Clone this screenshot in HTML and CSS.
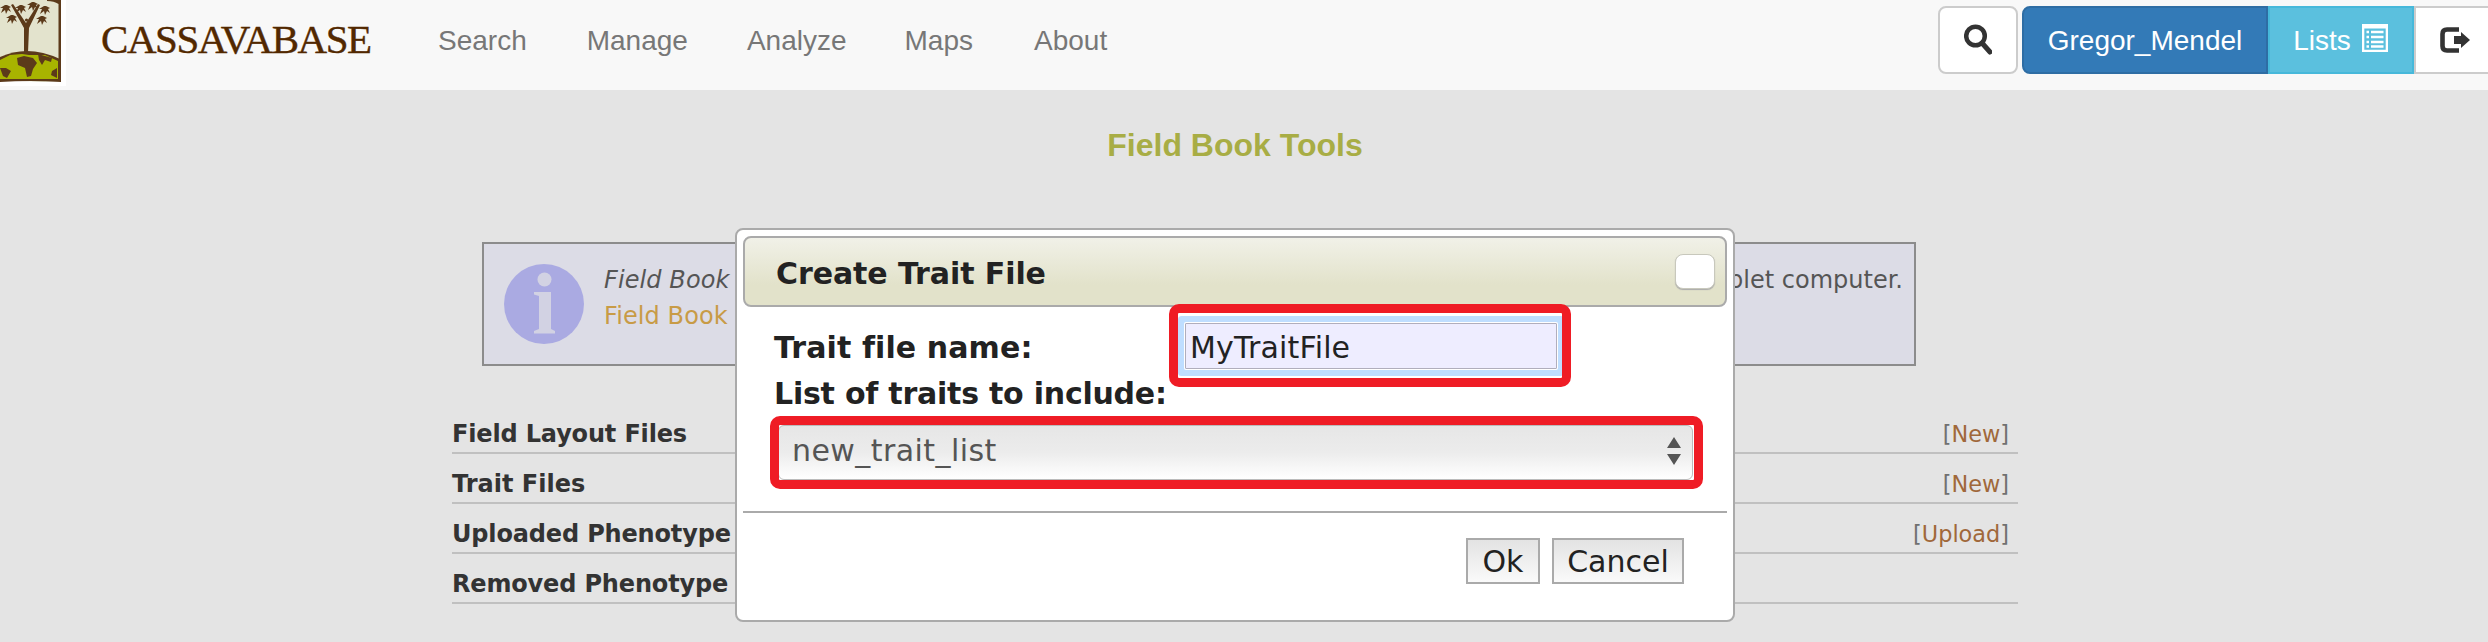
FILE: index.html
```html
<!DOCTYPE html>
<html lang="en">
<head>
<meta charset="utf-8">
<title>Field Book Tools</title>
<link rel="stylesheet" href="styles.css">
</head>
<body>
<header class="navbar">
  <svg class="logo" viewBox="0 0 66 86">
    <rect width="66" height="86" fill="#fff"/>
    <path d="M0 0H56L60 2V81L44 82L0 80Z" fill="#e3e3cd"/>
    <path d="M0 57Q28 44 60 59V81L0 80Z" fill="#5c3a1a"/>
    <path d="M0 60L10 55L22 54L29 55L45 55L58 61V79L40 80L0 79Z" fill="#a8b400"/>
    <path d="M17 58L24 56L33 58L37 63L33 69L31 76L27 77L25 68L18 65ZM38 54L52 58L51 62L45 60L42 65L39 60ZM0 68L6 68L11 71L7 78L3 76ZM57 68V78L51 75L52 71Z" fill="#5c3a1a"/>
    <path d="M47 0H61V82Q30 80 0 82V79H58.500V4Q54 1 47 1Z" fill="#5c3a1a"/>
    <path d="M24 53V28L11 5L13 4L26 23L38 4L40 5L29 28L28 53Z" fill="#5c3a1a"/>
    <g fill="#5c3a1a">
      <path id="leaf" d="M5 5L0 8L3 8L1 13L5 10L6 14L8 10L11 12L9 8L11 7L7 5Z"/>
      <use href="#leaf" x="15" y="0"/><use href="#leaf" x="27" y="-3"/><use href="#leaf" x="39" y="1"/>
      <use href="#leaf" x="6" y="10"/><use href="#leaf" x="36" y="11"/>
      <circle cx="26.500" cy="20" r="1.600"/>
    </g>
  </svg>
  <span class="brand">CASSAVABASE</span>
  <nav class="menu"><a>Search</a><a>Manage</a><a class="analyze">Analyze</a><a class="maps">Maps</a><a class="about">About</a></nav>
  <div class="tools">
    <button class="btn btn-search"><svg class="glyph" viewBox="0 0 28 32"><circle cx="11.500" cy="12" r="9.300" fill="none" stroke="#333" stroke-width="4.500"/><path d="M18 19L26 28" stroke="#333" stroke-width="5" stroke-linecap="round"/></svg></button>
    <div class="group">
      <button class="btn btn-user">Gregor_Mendel</button>
      <button class="btn btn-lists"><span>Lists</span><svg class="list-icon" viewBox="0 0 26 28"><path fill="#fff" fill-rule="evenodd" d="M0 0H26V28H0ZM2.300 4.500V25.700H23.700V4.500Z"/><path stroke="#fff" stroke-width="2.400" d="M4.500 8H7M9 8H21.500M4.500 13H7M9 13H21.500M4.500 18H7M9 18H21.500M4.500 22.500H7M9 22.500H21.500"/></svg></button>
      <button class="btn btn-out"><svg class="out-icon" viewBox="0 0 30 26"><path d="M19 2.500H7Q2.500 2.500 2.500 7V19Q2.500 23.500 7 23.500H19" fill="none" stroke="#333" stroke-width="4.600"/><path d="M14 9H21V5L30 13L21 21V17H14Z" fill="#333"/></svg></button>
    </div>
  </div>
</header>
<main class="page">
  <h1 class="page-title">Field Book Tools</h1>
  <section class="info">
    <svg class="info-icon" viewBox="0 0 80 80"><circle cx="40" cy="40" r="40" fill="#aaaae2"/><g fill="#d2d2e3"><circle cx="40.500" cy="15.500" r="7"/><path d="M30 28H47V65L51 67V69.500H30V67L35 65V32L30 30.500Z"/></g></svg>
    <div class="info-text"><em>Field Book</em><a>Field Book</a></div>
    <span class="info-end">tablet computer.</span>
  </section>
  <section class="files">
    <div class="row"><b>Field Layout Files</b><span class="act">[<a>New</a>]</span></div>
    <div class="row"><b class="short">Trait Files</b><span class="act">[<a>New</a>]</span></div>
    <div class="row"><b>Uploaded Phenotype</b><span class="act">[<a>Upload</a>]</span></div>
    <div class="row"><b>Removed Phenotype</b></div>
  </section>
</main>
<div class="dialog">
  <div class="dialog-head"><span class="dialog-title">Create Trait File</span><button class="close" aria-label="Close"></button></div>
  <div class="dialog-body">
    <div class="field"><label class="l1">Trait file name:</label><div class="input">MyTraitFile</div></div>
    <label class="l2">List of traits to include:</label>
    <div class="select"><span>new_trait_list</span><svg class="arrows" viewBox="0 0 14 28"><path d="M7 0L14 11H0ZM7 28L14 17H0Z" fill="#555"/></svg></div>
  </div>
  <div class="dialog-foot"><button class="action ok">Ok</button><button class="action cancel">Cancel</button></div>
  <div class="mark mark-input"></div>
  <div class="mark mark-select"></div>
</div>
</body>
</html>
```

FILE: styles.css
```css
* { box-sizing: border-box; }
body { margin: 0; width: 2488px; height: 642px; overflow: hidden; background: #e4e4e4; font-family: Verdana, "DejaVu Sans", sans-serif; position: relative; }
button { font: inherit; margin: 0; padding: 0; }
.navbar { height: 90px; background: #f8f8f8; display: flex; align-items: flex-start; font-family: "Liberation Sans", Arial, sans-serif; font-size: 28px; overflow: hidden; }
.logo { width: 66px; height: 86px; flex: none; }
.brand { width: 342px; padding-left: 35px; font: 41px/79px "Liberation Serif", serif; letter-spacing: -1.45px; color: #522800; -webkit-text-stroke: 0.4px #522800; white-space: nowrap; }
.menu { display: flex; color: #777; line-height: 82px; }
.menu a { padding: 0 30px; }
.menu .analyze { margin-left: -1px; }
.menu .maps { margin-left: -2px; }
.menu .about { margin-left: 1px; }
.tools { display: flex; gap: 4px; margin-left: auto; padding-top: 6px; margin-right: -10px; flex: none; }
.btn { height: 68px; border: 2px solid #ccc; background: #fff; display: flex; align-items: center; justify-content: center; line-height: 64px; color: #fff; }
.btn-search { width: 80px; border-radius: 8px; }
.glyph { width: 28px; height: 32px; }
.group { display: flex; }
.btn-user { width: 246px; background: #337ab7; border-color: #2e6da4; border-radius: 8px 0 0 8px; padding-top: 2px; }
.btn-lists { width: 146px; background: #5bc0de; border-color: #46b8da; gap: 11px; padding: 2px 1px 0 0; }
.list-icon { width: 26px; height: 28px; margin-top: -6px; }
.btn-out { width: 84px; border-radius: 0 8px 8px 0; }
.out-icon { width: 30px; height: 26px; margin-left: -2px; }
.page { display: flex; flex-direction: column; }
.page-title { margin: 37px 0 0; padding-right: 18px; height: 36px; font: bold 32px/36px "Liberation Sans", Arial, sans-serif; color: #a8ad45; text-align: center; }
.info { margin: 79px 0 0 482px; width: 1434px; height: 124px; border: 2px solid #8c8c8c; background: #dcdce6; display: flex; padding: 20px 11px 20px 20px; font-size: 24px; line-height: 36px; color: #555; }
.info-icon { width: 80px; height: 80px; }
.info-text { display: flex; flex-direction: column; margin-left: 20px; margin-top: -2px; white-space: nowrap; letter-spacing: 0.1px; }
.info-text a { color: #c89b46; }
.info-end { margin-left: auto; margin-top: -2px; }
.files { margin: 38px 0 0 452px; width: 1566px; }
.row { height: 50px; border-bottom: 2px solid #c0c0c0; display: flex; justify-content: space-between; padding: 12px 9px 0 0; font-size: 24px; line-height: 36px; color: #333; }
.row b { white-space: nowrap; letter-spacing: -0.16px; }
.row .short { letter-spacing: 0; }
.act { font-size: 22.4px; color: #707070; }
.act a { color: #a0683a; }
.dialog { position: absolute; left: 735px; top: 228px; width: 1000px; height: 394px; border: 2px solid #aaa; border-radius: 8px; background: #fff; padding: 6px; font-size: 30px; color: #222; }
.dialog-head { height: 71px; border: 2px solid #aaa; border-radius: 8px; background: linear-gradient(#f1f1e8, #e2e2ca 70%); display: flex; justify-content: space-between; align-items: center; padding: 0 10px 0 31px; font-weight: bold; }
.dialog-title { padding-top: 3px; letter-spacing: -0.08px; }
.close { width: 40px; height: 35px; border: 1px solid #c8c8bc; border-radius: 8px; background: #fff; box-shadow: 0 1px 1px #aaa; }
.dialog-body { height: 204px; padding: 16px 24px 0 31px; font-weight: bold; }
.field { display: flex; height: 46px; line-height: 50px; }
.l1 { width: 411px; white-space: nowrap; letter-spacing: 0.1px; }
.input { width: 372px; height: 46px; line-height: 46px; border: 1px solid #b0aebc; background: #eeedff; padding: 1px 0 0 4px; font-weight: normal; letter-spacing: 0.15px; box-shadow: 0 0 0 1px #fff, 0 0 0 7px #bfdeff; border-radius: 1px; }
.l2 { display: block; height: 54px; line-height: 50px; white-space: nowrap; letter-spacing: -0.23px; }
.select { margin-top: 2px; margin-left: 4px; width: 915px; height: 55px; line-height: 48px; background: linear-gradient(#e6e6e6, #ececec 50%, #fff); border: 1px solid #bbb; border-radius: 6px; display: flex; align-items: center; justify-content: space-between; padding: 0 11px 4px 13px; font-weight: normal; color: #555; letter-spacing: 0.43px; }
.arrows { width: 14px; height: 28px; }
.dialog-foot { height: 103px; border-top: 2px solid #aaa; display: flex; justify-content: flex-end; gap: 12px; padding: 25px 43px 0 0; }
.action { height: 46px; border: 2px solid #aaa; background: linear-gradient(#e3e3e3, #fafafa); color: #222; line-height: 42px; padding-top: 1px; }
.ok { width: 74px; }
.cancel { width: 132px; }
.mark { position: absolute; border: 9px solid #ef1c25; border-radius: 10px; }
.mark-input { left: 432px; top: 74px; width: 402px; height: 83px; }
.mark-select { left: 33px; top: 186px; width: 933px; height: 73px; }
```
